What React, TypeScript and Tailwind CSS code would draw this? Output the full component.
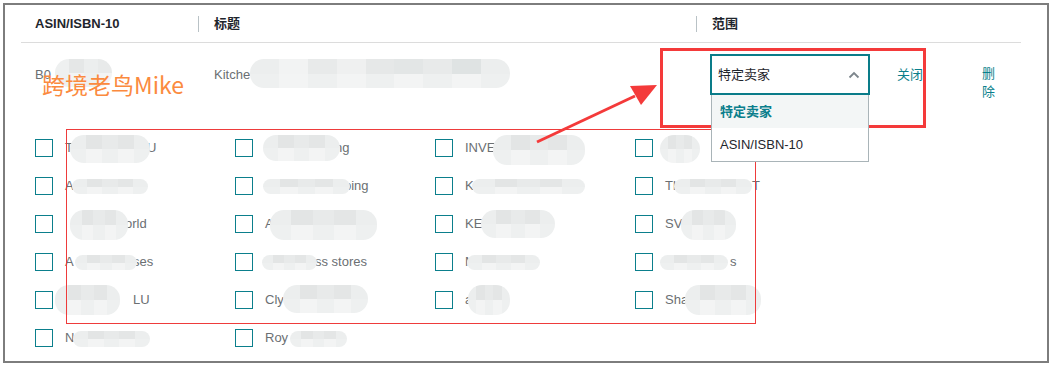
import React from "react";

const FONT = { fontFamily: '"Liberation Sans", Arial, "Noto Sans CJK SC", sans-serif' };

function Blob({ left, top, w, h, shades }: { left: number; top: number; w: number; h: number; shades: string[] }) {
  return (
    <div
      className="absolute flex flex-col overflow-hidden rounded-[14px]"
      style={{ left, top, width: w, height: h }}
    >
      <div className="flex flex-1">
        {shades.map((c, i) => (
          <div key={i} className="flex-1" style={{ background: c }} />
        ))}
      </div>
      <div className="flex flex-1">
        {shades.map((c, i) => (
          <div key={i} className="flex-1" style={{ background: i % 2 ? "#f3f4f4" : "#eef0f0" }} />
        ))}
      </div>
    </div>
  );
}

type Item = { pre: string; postX?: number; post?: string; b: [number, number, number, number] };

const S1 = ["#eceeee", "#e3e5e5", "#e8eaea", "#e4e6e6", "#eceeee"];

const cols: Item[][] = [
  [
    { pre: "T", postX: 82, post: "U", b: [5, -4, 80, 28] },
    { pre: "A", b: [7, 2, 76, 15] },
    { pre: "", postX: 60, post: "orld", b: [5, -5, 58, 30] },
    { pre: "A", postX: 68, post: "ses", b: [10, 2, 62, 15] },
    { pre: "", postX: 68, post: "LU", b: [-10, -6, 65, 30] },
    { pre: "N", b: [8, 2, 77, 16] },
  ],
  [
    { pre: "", postX: 70, post: "ng", b: [-2, -4, 77, 26] },
    { pre: "", postX: 79, post: "bing", b: [-2, 2, 87, 15] },
    { pre: "A", b: [5, -5, 107, 30] },
    { pre: "", postX: 50, post: "ss stores", b: [-3, 2, 55, 15] },
    { pre: "Cly", b: [18, -6, 85, 28] },
    { pre: "Roy", b: [25, 2, 57, 16] },
  ],
  [
    { pre: "INVE", b: [28, -4, 92, 30] },
    { pre: "K", b: [7, 2, 113, 15] },
    { pre: "KE", b: [16, -5, 74, 28] },
    { pre: "M", b: [2, 2, 73, 15] },
    { pre: "a", b: [3, -6, 42, 30] },
  ],
  [
    { pre: "", postX: 46, post: "o", b: [-5, -4, 40, 28] },
    { pre: "Th", postX: 87, post: "T", b: [9, 2, 78, 15] },
    { pre: "SV", b: [16, -5, 55, 30] },
    { pre: "", postX: 65, post: "s", b: [-5, 2, 68, 15] },
    { pre: "Sha", b: [20, -6, 76, 30] },
  ],
];

function CheckRow({ item }: { item: Item }) {
  return (
    <div className="flex h-[38px] items-start">
      <span className="h-[18px] w-[18px] shrink-0 border-[1.5px] border-[#0b7f8c] bg-white" />
      <div className="relative ml-[12px] h-[18px] w-[160px] text-[13px] leading-[18px] text-[#6b6f73]">
        <span>{item.pre}</span>
        {item.post && (
          <span className="absolute top-0 whitespace-nowrap" style={{ left: item.postX }}>
            {item.post}
          </span>
        )}
        <Blob left={item.b[0]} top={item.b[1]} w={item.b[2]} h={item.b[3]} shades={S1} />
      </div>
    </div>
  );
}

export default function App() {
  return (
    <div className="relative h-[366px] w-[1053px] overflow-hidden bg-white" style={FONT}>
      <div className="ml-[3px] mt-[3px] h-[360px] w-[1046px] border-2 border-[#7d7d7d] bg-white">
        {/* table region */}
        <div className="ml-[16px] w-[1000px]">
          {/* header */}
          <div className="flex h-[38px] items-center border-b border-[#dcdcdc] text-[13px] font-bold text-[#1f262d]">
            <div className="w-[177px] pl-[14px]">ASIN/ISBN-10</div>
            <div className="h-[16px] w-px bg-[#b9c2c6]" />
            <div className="w-[497px] pl-[15px]">标题</div>
            <div className="h-[16px] w-px bg-[#b9c2c6]" />
            <div className="pl-[15px]">范围</div>
          </div>
          {/* data row */}
          <div className="flex h-[55px] text-[13px] text-[#6b6f73]">
            <div className="relative w-[178px] pl-[14px] pt-[22px]">
              B0
              <Blob left={34} top={16} w={57} h={28} shades={["#eef0f0", "#e5e7e7", "#eceeee", "#e8eaea"]} />
            </div>
            <div className="relative w-[497px] pl-[15px] pt-[22px]">
              Kitche
              <Blob left={51} top={16} w={260} h={29} shades={["#eceeee", "#f2f3f3", "#e8eaea", "#eff0f0", "#e6e8e8", "#e3e6e6", "#e8eaea", "#dfe3e3", "#eceeee"]} />
            </div>
            <div className="relative pl-[14px] pt-[11px]">
              <div className="relative">
                <div className="flex h-[41px] w-[160px] items-center justify-between border-2 border-[#0a7c89] pl-[6px] pr-[8px] text-[13px] text-[#1f262d]">
                  <span>特定卖家</span>
                  <svg width="12" height="8" viewBox="0 0 12 8">
                    <path d="M1.5 6.5 L6 2 L10.5 6.5" fill="none" stroke="#7d868c" strokeWidth="1.8" />
                  </svg>
                </div>
                <div className="absolute left-[1px] top-[41px] z-10 w-[158px] border border-t-0 border-[#a9b4b8] bg-white text-[13px]">
                  <div className="flex h-[33px] items-center bg-[#f3f6f6] pl-[8px] font-bold text-[#0b7f8c]">特定卖家</div>
                  <div className="flex h-[33px] items-center pl-[8px] text-[#1f262d]">ASIN/ISBN-10</div>
                </div>
              </div>
            </div>
            <div className="ml-[27px] pt-[22px] text-[13px] text-[#0b7f8c]">关闭</div>
            <div className="ml-[59px] w-[14px] pt-[22px] text-[13px] leading-[18px] text-[#0b7f8c]">删除</div>
          </div>
        </div>
        {/* checkbox grid */}
        <div className="ml-[30px] mt-[41px] flex">
          {cols.map((col, ci) => (
            <div key={ci} className="w-[200px]">
              {col.map((it, ri) => (
                <CheckRow key={ri} item={it} />
              ))}
            </div>
          ))}
        </div>
      </div>

      {/* annotations */}
      <div className="pointer-events-none absolute left-[42px] top-[70px] text-[23px] leading-[28px] text-[#fb8a3e]" style={{ fontFamily: '"Noto Sans CJK SC", "Open Sans", sans-serif' }}>
        跨境老鸟Mike
      </div>
      <div className="pointer-events-none absolute left-[660px] top-[48px] h-[80px] w-[266px] border-[3px] border-[#f43a3a]" />
      <div className="pointer-events-none absolute left-[66px] top-[129px] h-[195px] w-[690px] border border-[#ee3b3b]" />
      <svg className="pointer-events-none absolute left-0 top-0" width="1053" height="366">
        <line x1="537" y1="142" x2="635" y2="96" stroke="#f43a3a" strokeWidth="3" />
        <polygon points="657,85 630,86 641,105" fill="#f43a3a" />
      </svg>
    </div>
  );
}
